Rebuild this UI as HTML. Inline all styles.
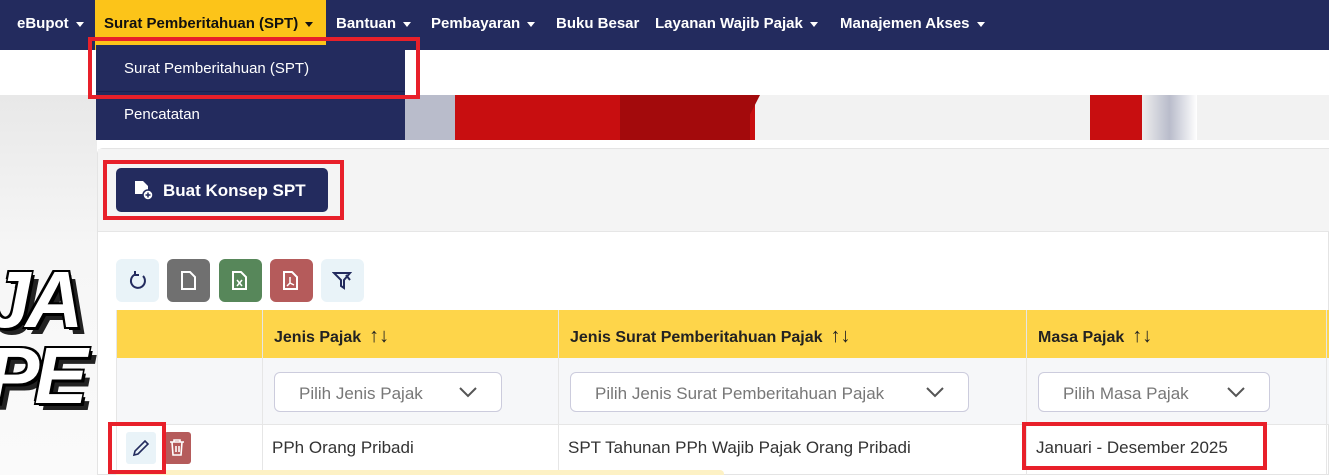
<!DOCTYPE html>
<html><head><meta charset="utf-8"><style>
*{box-sizing:border-box;margin:0;padding:0}
body{width:1329px;height:475px;overflow:hidden;position:relative;font-family:"Liberation Sans",sans-serif;background:#fff}
.abs{position:absolute}
.nav{left:0;top:0;width:1329px;height:50px;background:#232b5e}
.ni{position:absolute;top:0;height:50px;line-height:48px;color:#fff;font-weight:bold;font-size:15px;white-space:nowrap}
.car{display:inline-block;width:0;height:0;border-left:4px solid transparent;border-right:4px solid transparent;border-top:5px solid currentColor;vertical-align:middle;margin-left:7px}
.rb{position:absolute;border:4px solid #e8202a}
.sel{position:absolute;top:372px;height:40px;border:1px solid #ccd;border-radius:6px;background:#fff;color:#777;font-size:17px;line-height:41px;padding-left:24px}
.sel svg{position:absolute;right:24px;top:13px}
.tb{position:absolute;top:259px;width:43px;height:43px;border-radius:6px}
.th{position:absolute;top:310px;height:48px;line-height:52px;font-weight:bold;font-size:16px;color:#222;padding-left:12px}
.th span{font-weight:normal;margin-left:8px;font-size:20px}
.td{position:absolute;top:425px;height:45px;line-height:46px;font-size:17px;color:#333;padding-left:10px}
</style></head><body>
<div class="abs" style="left:0;top:95px;width:97px;height:380px;background:linear-gradient(180deg,#e8e8e8,#f6f6f6 40%,#fafafa)"></div>
<div class="abs" style="left:-14px;top:262px;font:italic 900 80px 'Liberation Sans',sans-serif;color:#fff;letter-spacing:-5px;line-height:76px;text-shadow:3px 3px 0 #000,-2px -2px 0 #000,2px -2px 0 #000,-2px 2px 0 #000,7px 7px 0 #222">JA<br>PE</div>
<div class="abs" style="left:97px;top:95px;width:1232px;height:45px;background:#f2f2f2"></div>
<div class="abs" style="left:400px;top:95px;width:60px;height:45px;background:#b9bccb"></div>
<div class="abs" style="left:455px;top:95px;width:300px;height:45px;background:#c80e10"></div>
<div class="abs" style="left:620px;top:95px;width:130px;height:45px;background:#a30a0c"></div>
<svg class="abs" style="left:720px;top:95px" width="40" height="45"><polygon points="0,0 40,0 17,45 0,45" fill="#a30a0c"/></svg>
<div class="abs" style="left:1090px;top:95px;width:52px;height:45px;background:#c80e10"></div>
<div class="abs" style="left:1142px;top:95px;width:55px;height:45px;background:linear-gradient(90deg,#eee,#b9bccb,#fff)"></div>
<div class="abs" style="left:97px;top:148px;width:1232px;height:327px;background:#fff;border:1px solid #e4e4e4;border-radius:6px 0 0 0"></div>
<div class="abs" style="left:98px;top:149px;width:1231px;height:83px;background:#f4f4f4;border-bottom:1px solid #e6e6e6"></div>
<div class="abs" style="left:116px;top:168px;width:212px;height:44px;background:#232b5e;border-radius:5px;color:#fff;font-weight:bold;font-size:17px;line-height:46px;padding-left:47px">Buat Konsep SPT</div>
<svg class="abs" style="left:133px;top:180px" width="22" height="22"><path d="M2 1h8l5 5v8H2z" fill="#fff"/><circle cx="15" cy="15" r="5" fill="#fff" stroke="#232b5e" stroke-width="1.5"/><path d="M12.5 15h5M15 12.5v5" stroke="#232b5e" stroke-width="1.5"/></svg>
<div class="tb" style="left:116px;background:#e9f3f8"></div>
<svg class="abs" style="left:127px;top:270px" width="22" height="22" fill="none" stroke="#232b5e" stroke-width="2"><path d="M16 6a7 7 0 1 1-8-1.5"/><path d="M8 1v4h4"/></svg>
<div class="tb" style="left:167px;background:#707070"></div>
<svg class="abs" style="left:179px;top:271px" width="20" height="20" fill="none" stroke="#fff" stroke-width="2"><path d="M3 1h8l5 5v12H3z"/></svg>
<div class="tb" style="left:219px;background:#57875a"></div>
<svg class="abs" style="left:230px;top:271px" width="20" height="20" fill="none" stroke="#fff" stroke-width="2"><path d="M3 1h8l5 5v12H3z"/><path d="M7 9l5 6M12 9l-5 6" stroke-width="1.5"/></svg>
<div class="tb" style="left:270px;background:#b55b5b"></div>
<svg class="abs" style="left:281px;top:271px" width="20" height="20" fill="none" stroke="#fff" stroke-width="2"><path d="M3 1h8l5 5v12H3z"/><path d="M9 6v6l-3 3M9 12l4 2" stroke-width="1.5"/></svg>
<div class="tb" style="left:321px;background:#e9f3f8"></div>
<svg class="abs" style="left:332px;top:271px" width="22" height="20" fill="none" stroke="#232b5e" stroke-width="2"><path d="M2 2h16l-6 7v8l-3-2V9z"/><path d="M14 4l4 5" /></svg>
<div class="abs" style="left:116px;top:310px;width:1213px;height:48px;background:#fed54a"></div>
<div class="abs" style="left:116px;top:358px;width:1213px;height:67px;background:#f6f7f9;border-bottom:1px solid #e6e6e6"></div>
<div class="abs" style="left:116px;top:310px;width:1px;height:165px;background:#e6e6e6"></div>
<div class="abs" style="left:262px;top:310px;width:1px;height:165px;background:#e6e6e6"></div>
<div class="abs" style="left:558px;top:310px;width:1px;height:165px;background:#e6e6e6"></div>
<div class="abs" style="left:1026px;top:310px;width:1px;height:165px;background:#e6e6e6"></div>
<div class="abs" style="left:1326px;top:310px;width:1px;height:165px;background:#e6e6e6"></div>
<div class="th" style="left:262px">Jenis Pajak<span>↑↓</span></div>
<div class="th" style="left:558px">Jenis Surat Pemberitahuan Pajak<span>↑↓</span></div>
<div class="th" style="left:1026px">Masa Pajak<span>↑↓</span></div>
<div class="sel" style="left:274px;width:228px">Pilih Jenis Pajak<svg width="18" height="12"><path d="M1 2l8 8 8-8" fill="none" stroke="#555" stroke-width="2"/></svg></div>
<div class="sel" style="left:570px;width:399px">Pilih Jenis Surat Pemberitahuan Pajak<svg width="18" height="12"><path d="M1 2l8 8 8-8" fill="none" stroke="#555" stroke-width="2"/></svg></div>
<div class="sel" style="left:1038px;width:232px">Pilih Masa Pajak<svg width="18" height="12"><path d="M1 2l8 8 8-8" fill="none" stroke="#555" stroke-width="2"/></svg></div>
<div class="abs" style="left:126px;top:432px;width:30px;height:32px;background:#e9f3f8;border-radius:3px"></div>
<svg class="abs" style="left:131px;top:438px" width="20" height="20" fill="none" stroke="#232b5e" stroke-width="1.6"><path d="M3 17l1-4L14 3l3 3L7 16z"/></svg>
<div class="abs" style="left:164px;top:432px;width:27px;height:32px;background:#b55b5b;border-radius:3px"></div>
<svg class="abs" style="left:168px;top:438px" width="18" height="20" fill="none" stroke="#fff" stroke-width="1.6"><path d="M2 4h14M6 4V2h6v2M4 4l1 13h8l1-13M8 8v6M11 8v6"/></svg>
<div class="td" style="left:262px">PPh Orang Pribadi</div>
<div class="td" style="left:558px">SPT Tahunan PPh Wajib Pajak Orang Pribadi</div>
<div class="td" style="left:1026px">Januari - Desember 2025</div>
<div class="abs" style="left:116px;top:470px;width:608px;height:5px;background:#fdf1c4;border-radius:0 4px 0 0"></div>
<div class="abs nav"></div>
<div class="abs" style="left:95px;top:0;width:231px;height:50px;background:#fcc419"></div>
<div class="ni" style="left:17px">eBupot<span class="car"></span></div>
<div class="ni" style="left:104px;color:#111">Surat Pemberitahuan (SPT)<span class="car"></span></div>
<div class="ni" style="left:336px">Bantuan<span class="car"></span></div>
<div class="ni" style="left:431px">Pembayaran<span class="car"></span></div>
<div class="ni" style="left:556px">Buku Besar</div>
<div class="ni" style="left:655px">Layanan Wajib Pajak<span class="car"></span></div>
<div class="ni" style="left:840px">Manajemen Akses<span class="car"></span></div>
<div class="abs" style="left:96px;top:45px;width:309px;height:95px;background:#232b5e"></div>
<div class="abs" style="left:96px;top:91px;width:309px;height:1px;background:#1a2150"></div>
<div class="abs" style="left:124px;top:60px;color:#fff;font-size:15px">Surat Pemberitahuan (SPT)</div>
<div class="abs" style="left:124px;top:106px;color:#fff;font-size:15px">Pencatatan</div>
<div class="rb" style="left:88px;top:37px;width:332px;height:62px"></div>
<div class="rb" style="left:103px;top:160px;width:241px;height:60px"></div>
<div class="rb" style="left:108px;top:422px;width:58px;height:52px"></div>
<div class="rb" style="left:1022px;top:422px;width:245px;height:48px"></div>
</body></html>
